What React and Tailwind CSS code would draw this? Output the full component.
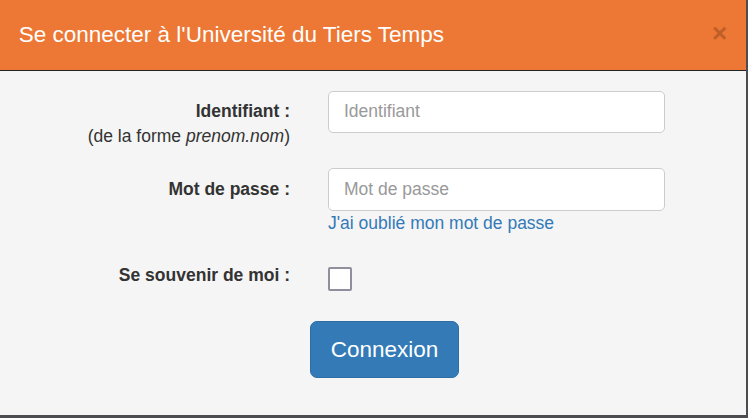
import React from 'react';

const font = { fontFamily: '"Liberation Sans", Arial, sans-serif' };

const Row = ({ label, children, className = '' }) => (
  <div className={`flex items-start gap-[38px] ${className}`}>
    <div className="w-[290px] shrink-0 pt-[8.75px] text-right text-[17.5px] leading-[25px] text-[#333]">{label}</div>
    <div className="w-[337px] shrink-0">{children}</div>
  </div>
);

export default function App() {
  return (
    <div className="h-screen w-full overflow-hidden bg-[#4b4d50]" style={font}>
      <div className="flex h-[415px] w-[746px] flex-col bg-[#f5f5f5]">
        {/* Header */}
        <div className="flex items-start justify-between border-b border-[#222] bg-[#ed7734] px-[18.75px] py-[18.75px]">
          <h4 className="text-[22.5px] leading-[32px] text-white">Se connecter à l'Université du Tiers Temps</h4>
          <button className="-mt-[2px] text-[26px] font-bold leading-[32px] text-[#be5f2a]">×</button>
        </div>

        {/* Body */}
        <form className="flex flex-col px-0 pt-[20px]">
          <Row label={<>
            <span className="font-bold">Identifiant :</span><br />
            <span>(de la forme <em>prenom.nom</em>)</span>
          </>}>
            <input
              type="text"
              placeholder="Identifiant"
              className="h-[42.5px] w-full rounded-[5px] border border-[#ccc] bg-white px-[15px] text-[17.5px] text-[#555] placeholder:text-[#999] outline-none"
            />
          </Row>

          <Row label={<span className="font-bold">Mot de passe :</span>} className="mt-[18.75px]">
            <input
              type="password"
              placeholder="Mot de passe"
              className="h-[42.5px] w-full rounded-[5px] border border-[#ccc] bg-white px-[15px] text-[17.5px] text-[#555] placeholder:text-[#999] outline-none"
            />
            <a href="#" className="block text-[17.5px] leading-[25px] text-[#337ab7]">J'ai oublié mon mot de passe</a>
          </Row>

          <Row label={<span className="font-bold">Se souvenir de moi :</span>} className="mt-[18.75px]">
            <div className="mt-[13px] h-[24px] w-[24px] rounded-[2px] border-2 border-[#8f8f9d] bg-white" />
          </Row>

          <div className="mt-[30px] pl-[310px]">
            <button
              type="button"
              className="h-[57px] w-[149px] rounded-[7px] border border-[#2e6da4] bg-[#337ab7] text-[22.5px] text-white"
            >
              Connexion
            </button>
          </div>
        </form>
      </div>
    </div>
  );
}
